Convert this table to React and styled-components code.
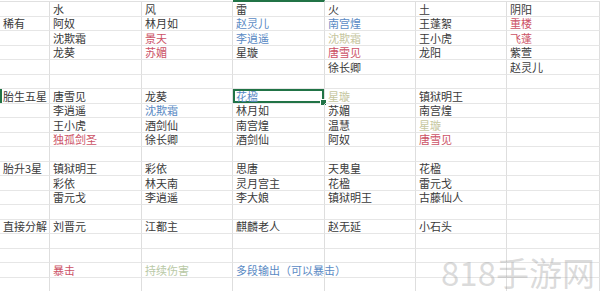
import React from "react";
import styled, { createGlobalStyle } from "styled-components";

const Global = createGlobalStyle`
  html, body { margin: 0; padding: 0; background: #fff; overflow: hidden; }
  #root { width: 600px; height: 291px; }
`;

const Sheet = styled.div`
  position: relative;
  width: 600px;
  height: 291px;
  overflow: hidden;
  background: #fff;
  padding-top: 1px;
  box-sizing: border-box;
  font-family: "Noto Sans CJK SC", "Noto Sans", sans-serif;
`;

const Grid = styled.div`
  display: grid;
  grid-template-columns: 50px 92px 91px 92px 91px 91px 93px;
  grid-template-rows: repeat(20, 14.5px);
  border-top: 1px solid #e0e0e0;
`;

const Cell = styled.div`
  position: relative;
  box-sizing: border-box;
  border-right: 1px solid #dedede;
  border-bottom: 1px solid #e6e6e6;
  padding: 0 3px;
  font-size: 11px;
  line-height: 14px;
  white-space: nowrap;
  overflow: visible;
  color: ${(p) => p.$color || "#3a3a3a"};
  display: flex;
  align-items: center;
  justify-content: flex-start;
  ${(p) =>
    p.$selected &&
    `
    box-shadow: inset 0 0 0 2px #217346;
    &::after {
      content: "";
      position: absolute;
      right: -3px;
      bottom: -3px;
      width: 5px;
      height: 5px;
      background: #217346;
      border: 1px solid #fff;
    }
  `}
  ${(p) =>
    p.$rowMark &&
    `
    &::before {
      content: "";
      position: absolute;
      left: 0;
      top: 0;
      bottom: 0;
      width: 2px;
      background: #217346;
    }
  `}
  ${(p) => p.$colMark && `border-top: 2px solid #217346; margin-top: -2px;`}
`;

const Watermark = styled.div`
  position: absolute;
  right: 5px;
  bottom: 2px;
  font-family: "Noto Sans CJK SC", "Noto Sans", sans-serif;
  font-size: 33px;
  line-height: 34px;
  color: rgba(160, 160, 160, 0.38);
  font-weight: 400;
`;

const R = "#cc5266";
const B = "#5a8ac4";
const K = "#c6c69e";
const G = "#b9c9a6";

const rows = [
  ["", "水", "风", "雷", "火", "土", "阴阳"],
  ["稀有", "阿奴", "林月如", ["赵灵儿", B], ["南宫煌", B], "王蓬絮", ["重楼", R]],
  ["", "沈欺霜", ["景天", R], ["李逍遥", B], ["沈欺霜", K], "王小虎", ["飞蓬", R]],
  ["", "龙葵", ["苏媚", R], "星璇", ["唐雪见", R], "龙阳", "紫萱"],
  ["", "", "", "", "徐长卿", "", "赵灵儿"],
  ["", "", "", "", "", "", ""],
  ["胎生五星", "唐雪见", "龙葵", ["花楹", B], ["星璇", K], "镇狱明王", ""],
  ["", "李逍遥", ["沈欺霜", B], "林月如", "苏媚", "南宫煌", ""],
  ["", "王小虎", "酒剑仙", "南宫煌", "温慧", ["星璇", K], ""],
  ["", ["独孤剑圣", R], "徐长卿", "酒剑仙", "阿奴", ["唐雪见", R], ""],
  ["", "", "", "", "", "", ""],
  ["胎升3星", "镇狱明王", "彩依", "思唐", "天鬼皇", "花楹", ""],
  ["", "彩依", "林天南", "灵月宫主", "花楹", "雷元戈", ""],
  ["", "雷元戈", "李逍遥", "李大娘", "镇狱明王", "古藤仙人", ""],
  ["", "", "", "", "", "", ""],
  ["直接分解", "刘晋元", "江都主", "麒麟老人", "赵无延", "小石头", ""],
  ["", "", "", "", "", "", ""],
  ["", "", "", "", "", "", ""],
  ["", ["暴击", R], ["持续伤害", G], ["多段输出（可以暴击）", B], "", "", ""],
  ["", "", "", "", "", "", ""],
];

export default function App() {
  return (
    <>
      <Global />
      <Sheet>
        <Grid>
          {rows.map((row, ri) =>
            row.map((c, ci) => {
              const text = Array.isArray(c) ? c[0] : c;
              const color = Array.isArray(c) ? c[1] : undefined;
              return (
                <Cell
                  key={`${ri}-${ci}`}
                  $color={color}
                  $selected={ri === 6 && ci === 3}
                  $rowMark={ri === 6 && ci === 0}
                  $colMark={ri === 0 && ci === 3}
                >
                  {text}
                </Cell>
              );
            })
          )}
        </Grid>
        <Watermark>818手游网</Watermark>
      </Sheet>
    </>
  );
}
